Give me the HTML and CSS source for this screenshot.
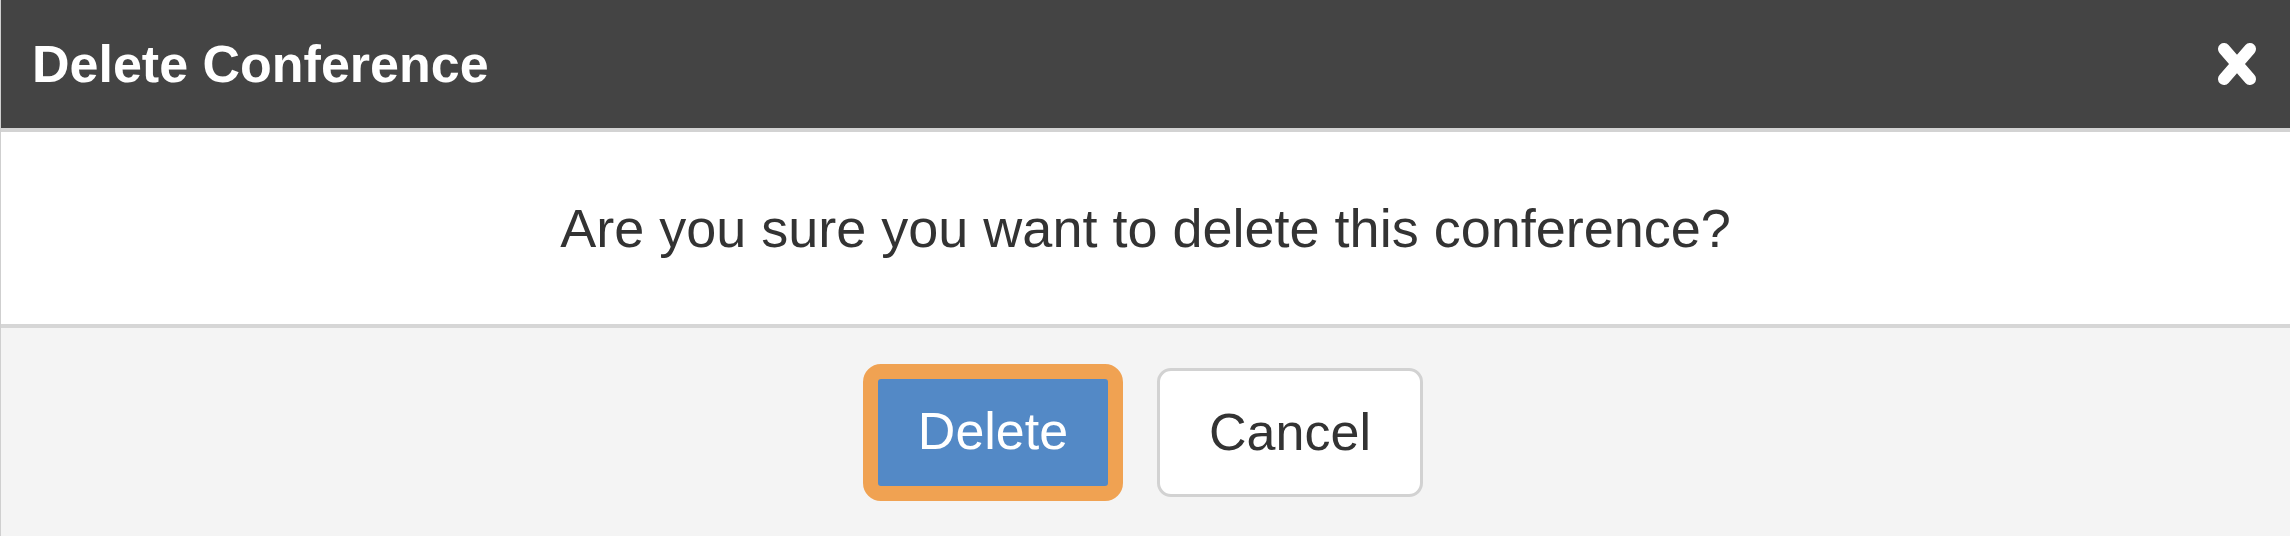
FILE: index.html
```html
<!DOCTYPE html>
<html lang="en">
<head>
<meta charset="utf-8">
<title>Delete Conference</title>
<link rel="stylesheet" href="styles.css">
</head>
<body>
<div class="dialog">
  <div class="dialog-header">
    <h1 class="dialog-title">Delete Conference</h1>
    <button class="close-btn" aria-label="Close">
      <svg class="close-icon" viewBox="0 0 40 44" width="40" height="44">
        <path d="M7 7 L33 37 M33 7 L7 37" stroke="#fff" stroke-width="12" stroke-linecap="round" fill="none"/>
      </svg>
    </button>
  </div>
  <div class="dialog-body">
    <p class="message">Are you sure you want to delete this conference?</p>
  </div>
  <div class="dialog-footer">
    <button class="btn btn-primary">Delete</button>
    <button class="btn btn-default">Cancel</button>
  </div>
</div>
</body>
</html>
```
FILE: styles.css
```css
* { box-sizing: border-box; }
html, body {
  margin: 0;
  padding: 0;
  background: #ffffff;
}
body {
  font-family: "Liberation Sans", Arial, sans-serif;
  color: #333333;
}
.dialog {
  display: flex;
  flex-direction: column;
  height: 536px;
  border-left: 1px solid #cfcfcf;
}
.dialog-header {
  flex: 0 0 auto;
  height: 132px;
  background: #444444;
  border-bottom: 4px solid #d3d3d3;
  display: flex;
  align-items: center;
  justify-content: space-between;
  padding: 0 33px 0 31px;
}
.dialog-title {
  margin: 0;
  font-size: 52px;
  font-weight: 700;
  color: #ffffff;
  line-height: 1;
}
.close-btn {
  background: none;
  border: 0;
  padding: 0;
  display: flex;
  align-items: center;
  cursor: pointer;
}
.close-icon { display: block; }
.dialog-body {
  flex: 0 0 auto;
  height: 196px;
  background: #ffffff;
  border-bottom: 4px solid #d6d6d6;
  display: flex;
  align-items: center;
  justify-content: center;
}
.message {
  margin: 0;
  font-size: 54px;
  line-height: 1;
  color: #333333;
}
.dialog-footer {
  flex: 1 1 auto;
  background: #f4f4f4;
  display: flex;
  align-items: center;
  justify-content: center;
  gap: 34px;
  padding-right: 5px;
}
.btn {
  font-family: "Liberation Sans", Arial, sans-serif;
  font-size: 52px;
  line-height: 1;
  cursor: pointer;
  display: flex;
  align-items: center;
  justify-content: center;
}
.btn-primary {
  width: 260px;
  height: 137px;
  background: #5389c6;
  color: #ffffff;
  border: 15px solid #f0a252;
  border-radius: 18px;
  padding: 0 0 2px 0;
}
.btn-default {
  width: 266px;
  height: 129px;
  background: #ffffff;
  color: #333333;
  border: 3px solid #d2d2d2;
  border-radius: 14px;
  padding: 0;
}
```
